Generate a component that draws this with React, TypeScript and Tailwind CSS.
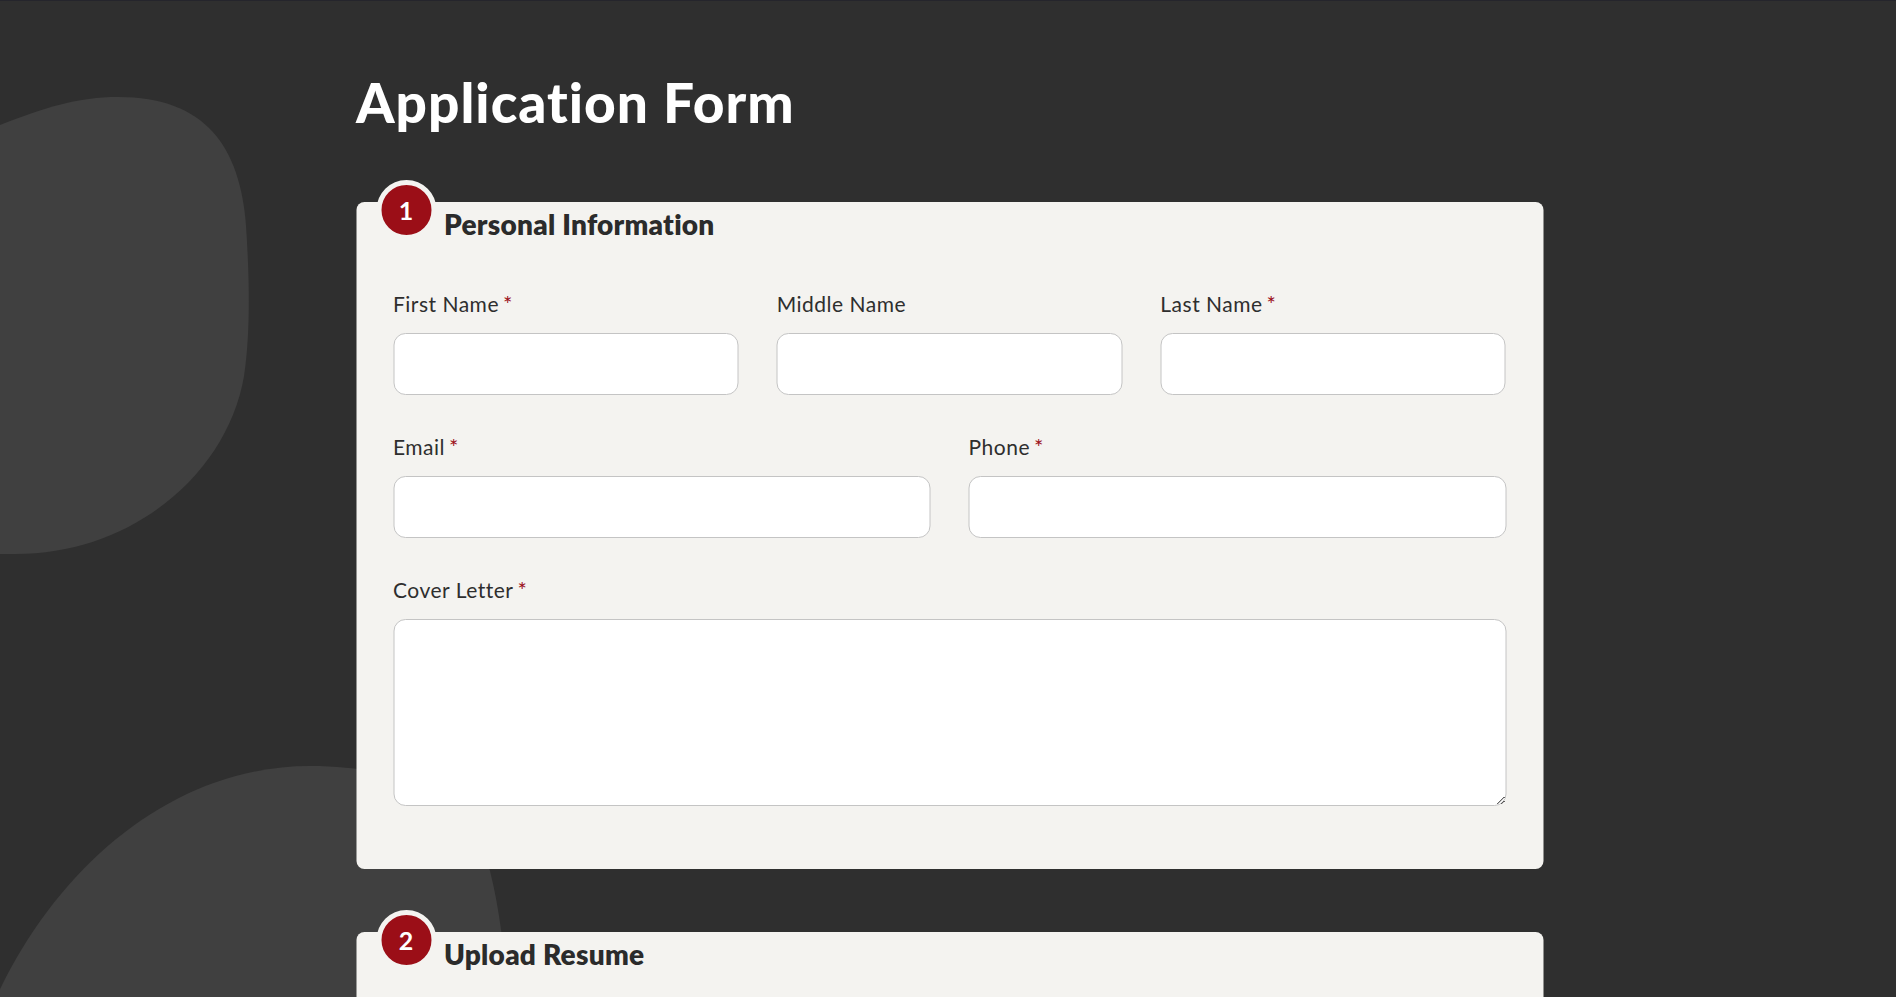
import React from "react";

const font = { fontFamily: "Lato, 'Noto Sans', sans-serif" };

function Label({ text, required }: { text: string; required?: boolean }) {
  return (
    <label className="block text-[21px] leading-[28px] tracking-[0.5px] text-[#2e2e2e] mb-[15px]">
      {text}
      {required && <span className="text-[22px] text-[#9b0e17] ml-[4px]">*</span>}
    </label>
  );
}

function Field({ text, required }: { text: string; required?: boolean }) {
  return (
    <div className="flex flex-col">
      <Label text={text} required={required} />
      <input
        type="text"
        className="h-[62px] w-full rounded-[12px] border border-[#c4c4c4] bg-white px-4 text-[18px] outline-none"
      />
    </div>
  );
}

function Badge({ n }: { n: number }) {
  return (
    <div className="absolute left-[20px] top-[-22px] flex h-[60px] w-[60px] items-center justify-center rounded-full border-[5px] border-[#f4f3f0] bg-[#9b0e17] text-[25px] font-bold leading-none text-white">
      {n}
    </div>
  );
}

export default function App() {
  return (
    <div
      className="relative min-h-[997px] w-full overflow-hidden bg-[#2f2f2f] border-t border-[#25252c]"
      style={font}
    >
      <svg
        className="absolute left-0 top-0"
        width="600"
        height="997"
        viewBox="0 0 600 997"
        aria-hidden="true"
      >
        <path
          d="M -10 128 C 40 108, 75 96, 118 96 C 205 96, 240 145, 246 225 C 250 285, 250 335, 244 375 C 228 470, 135 553, 15 553 L -10 553 Z"
          fill="#404040"
        />
        <path
          d="M -10 1010 C 50 870, 170 765, 310 765 C 410 765, 470 800, 490 870 C 500 910, 506 960, 508 1010 Z"
          fill="#404040"
        />
      </svg>

      <div className="relative mx-auto w-[1187px] translate-x-[1.5px] pt-[68px] pb-[40px]">
        <h1 className="text-[55px] font-black leading-[1.2] tracking-[1px] text-white">
          Application Form
        </h1>

        <section className="relative mt-[67px] rounded-[8px] bg-[#f4f3f0] px-[37px] pt-[5px] pb-[63px]">
          <Badge n={1} />
          <h2 className="ml-[51px] text-[28px] font-extrabold leading-[34px] tracking-[0.25px] text-[#2b2b2b]">
            Personal Information
          </h2>

          <div className="mt-[49px] flex flex-col gap-[38px]">
            <div className="grid grid-cols-3 gap-x-[38px]">
              <Field text="First Name" required />
              <Field text="Middle Name" />
              <Field text="Last Name" required />
            </div>
            <div className="grid grid-cols-2 gap-x-[38px]">
              <Field text="Email" required />
              <Field text="Phone" required />
            </div>
            <div className="flex flex-col">
              <Label text="Cover Letter" required />
              <textarea className="h-[187px] w-full rounded-[12px] border border-[#c4c4c4] bg-white p-4 text-[18px] outline-none" />
            </div>
          </div>
        </section>

        <section className="relative mt-[63px] rounded-[8px] bg-[#f4f3f0] px-[37px] pt-[5px] pb-[200px]">
          <Badge n={2} />
          <h2 className="ml-[51px] text-[28px] font-extrabold leading-[34px] tracking-[0.25px] text-[#2b2b2b]">
            Upload Resume
          </h2>
        </section>
      </div>
    </div>
  );
}
